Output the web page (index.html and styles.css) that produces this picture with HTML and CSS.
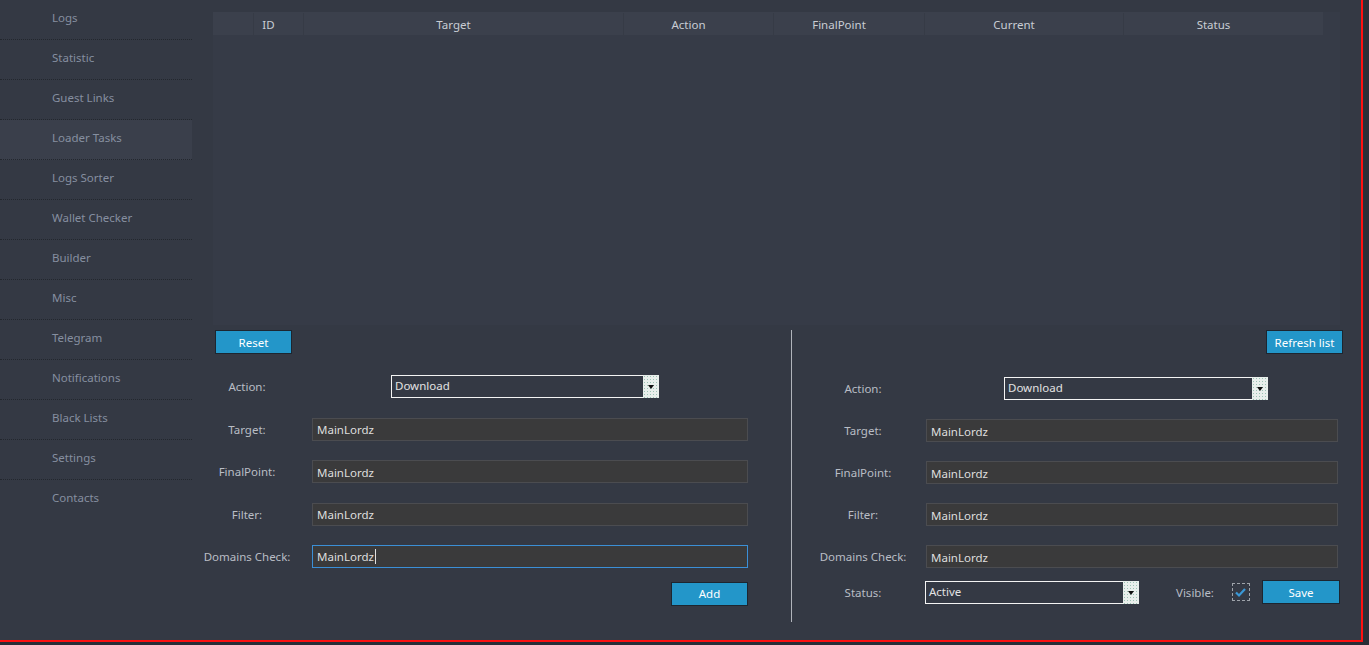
FILE: index.html
```html
<!DOCTYPE HTML>
<html lang="en-US">
	<head>
		<meta charset="UTF-8">
		<title>Loader Tasks</title>
		<link rel="stylesheet" href="styles.css">
	</head>
	<body>
		<div class="window">
			<nav class="sidebar">
				<a class="nav-item">Logs</a>
				<a class="nav-item">Statistic</a>
				<a class="nav-item">Guest Links</a>
				<a class="nav-item active">Loader Tasks</a>
				<a class="nav-item">Logs Sorter</a>
				<a class="nav-item">Wallet Checker</a>
				<a class="nav-item">Builder</a>
				<a class="nav-item">Misc</a>
				<a class="nav-item">Telegram</a>
				<a class="nav-item">Notifications</a>
				<a class="nav-item">Black Lists</a>
				<a class="nav-item">Settings</a>
				<a class="nav-item last">Contacts</a>
			</nav>
			<main class="main">
				<section class="tasks">
					<div class="tasks-head">
						<span class="col col-check"></span>
						<span class="col col-id">ID</span>
						<span class="col col-target">Target</span>
						<span class="col col-action">Action</span>
						<span class="col col-final">FinalPoint</span>
						<span class="col col-current">Current</span>
						<span class="col col-status">Status</span>
					</div>
				</section>
				<section class="editor">
					<form class="pane pane-add">
						<div class="pane-top">
							<button type="button" class="btn">Reset</button>
						</div>
						<div class="field">
							<label>Action:</label>
							<div class="select select-action">Download<span class="select-arrow"></span></div>
						</div>
						<div class="field">
							<label>Target:</label>
							<input class="input" type="text" value="MainLordz">
						</div>
						<div class="field">
							<label>FinalPoint:</label>
							<input class="input" type="text" value="MainLordz">
						</div>
						<div class="field">
							<label>Filter:</label>
							<input class="input" type="text" value="MainLordz">
						</div>
						<div class="field">
							<label>Domains Check:</label>
							<div class="input focused">MainLordz<span class="caret"></span></div>
						</div>
						<div class="pane-actions">
							<button type="button" class="btn">Add</button>
						</div>
					</form>
					<div class="divider"></div>
					<form class="pane pane-edit">
						<div class="pane-top">
							<button type="button" class="btn">Refresh list</button>
						</div>
						<div class="field">
							<label>Action:</label>
							<div class="select select-action">Download<span class="select-arrow"></span></div>
						</div>
						<div class="field">
							<label>Target:</label>
							<input class="input" type="text" value="MainLordz">
						</div>
						<div class="field">
							<label>FinalPoint:</label>
							<input class="input" type="text" value="MainLordz">
						</div>
						<div class="field">
							<label>Filter:</label>
							<input class="input" type="text" value="MainLordz">
						</div>
						<div class="field">
							<label>Domains Check:</label>
							<input class="input" type="text" value="MainLordz">
						</div>
						<div class="field field-status">
							<label>Status:</label>
							<div class="status-row">
								<div class="select select-status">Active<span class="select-arrow"></span></div>
								<span class="visible-label">Visible:</span>
								<span class="checkbox">
									<svg width="13" height="11" viewBox="0 0 13 11"><path d="M2 5.5 L5 8.5 L11 2" fill="none" stroke="#3a98d6" stroke-width="2.2"/></svg>
								</span>
								<button type="button" class="btn btn-save">Save</button>
							</div>
						</div>
					</form>
				</section>
			</main>
		</div>
	</body>
</html>
```

FILE: styles.css
```css
body {
	margin: 0;
	background: #2a2e37;
	font-family: "Noto Sans", "Open Sans", sans-serif;
	font-size: 11.5px;
}
.window {
	display: flex;
	width: 1361px;
	height: 640px;
	background: #343944;
	border-right: 2px solid #ff1010;
	border-bottom: 2px solid #ff1010;
	overflow: hidden;
}

/* left menu */
.sidebar {
	width: 192px;
	flex-shrink: 0;
	display: flex;
	flex-direction: column;
}
.nav-item {
	display: block;
	height: 39px;
	padding-left: 52px;
	line-height: 36px;
	color: #868fa0;
	border-bottom: 1px dotted #23272e;
	box-sizing: content-box;
}
.nav-item.active {
	background: #3a3f4b;
}
.nav-item.last {
	border-bottom: none;
}

/* main area */
.main {
	flex: 1;
	padding: 12px 0 0 8px;
}
.tasks {
	margin-left: 13px;
	width: 1127px;
	height: 313px;
	background: #363b47;
}
.tasks-head {
	display: flex;
	width: 1110px;
	height: 22px;
	padding-top: 1px;
	background: #3b404c;
}
.col {
	box-sizing: border-box;
	padding-right: 20px;
	text-align: center;
	line-height: 23px;
	color: #c9cdd4;
	border-left: 1px solid #363b46;
}
.col-check { width: 40px; border-left: none; }
.col-id { width: 50px; }
.col-target { width: 320px; }
.col-action { width: 150px; }
.col-final { width: 151px; }
.col-current { width: 199px; }
.col-status { width: 200px; }

/* task editor */
.editor {
	display: flex;
	margin-top: 5px;
}
.pane {
	box-sizing: border-box;
	margin: 0;
}
.pane-add {
	width: 591px;
	padding-right: 43px;
}
.pane-edit {
	width: 551px;
	padding-left: 24px;
	padding-right: 5px;
}
.divider {
	width: 1px;
	height: 292px;
	background: #b0b4bb;
}
.pane-top {
	height: 24px;
	margin-bottom: 22px;
}
.pane-add .pane-top {
	padding-left: 15px;
}
.pane-edit .pane-top {
	display: flex;
	justify-content: flex-end;
	margin-right: -5px;
	margin-bottom: 23px;
}
.btn {
	height: 24px;
	width: 77px;
	padding: 0;
	background: #2396c9;
	border: 1px solid #1d2630;
	color: #fff;
	font-family: inherit;
	font-size: 11.5px;
}
.field {
	display: grid;
	grid-template-columns: 94px 1fr;
	column-gap: 18px;
	align-items: center;
	height: 23px;
	margin-bottom: 19.5px;
}
.pane-add .field {
	margin-top: -1px;
	margin-bottom: 20.5px;
}
.pane-edit .field {
	column-gap: 16px;
	margin-bottom: 19px;
}
.field label {
	text-align: center;
	white-space: nowrap;
	color: #b9bdc5;
}
.input {
	box-sizing: border-box;
	height: 23px;
	width: 100%;
	padding: 1px 0 0 4px;
	background: #3a3a3b;
	border: 1px solid #4b4c50;
	color: #dedede;
	font-family: inherit;
	font-size: 11.5px;
	line-height: 19px;
	outline: none;
}
.input.focused {
	border-color: #3b8fd6;
}
.caret {
	display: inline-block;
	width: 1px;
	height: 15px;
	margin-left: 1px;
	vertical-align: -3px;
	background: #e0e0e0;
}
.select {
	position: relative;
	box-sizing: border-box;
	height: 23px;
	padding: 0 0 0 3px;
	background: #343944;
	border: 1px solid #f4f4f4;
	color: #e2e2e2;
	line-height: 19px;
}
.select-action {
	width: 268px;
	margin-left: 79px;
}
.pane-edit .select-action {
	margin-left: 78px;
	width: 264px;
}
.select-arrow {
	position: absolute;
	top: -1px;
	right: -1px;
	width: 16px;
	height: 23px;
	background-color: #e9efec;
	background-image: radial-gradient(#9cc3b5 0.8px, transparent 1px);
	background-size: 3px 3px;
}
.select-arrow::after {
	content: "";
	position: absolute;
	left: 5px;
	top: 10px;
	border-left: 3px solid transparent;
	border-right: 3px solid transparent;
	border-top: 4px solid #111;
}
.pane-actions {
	display: flex;
	justify-content: flex-end;
	margin-top: -7px;
}
.field-status {
	margin-top: -7px;
}
.status-row {
	display: flex;
	align-items: center;
}
.select-status {
	width: 214px;
	margin-left: -1px;
}
.visible-label {
	margin-left: 37px;
	color: #b9bdc5;
}
.checkbox {
	display: flex;
	align-items: center;
	justify-content: center;
	box-sizing: border-box;
	width: 18px;
	height: 18px;
	margin-left: 18px;
	border: 1px dashed #9ea3aa;
}
.btn-save {
	width: 78px;
	margin-left: 12px;
}
```
